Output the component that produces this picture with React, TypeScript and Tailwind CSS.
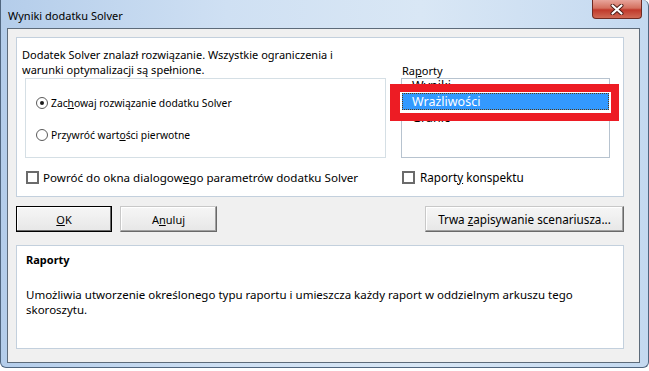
import React from 'react';

const Radio = ({ checked }: { checked?: boolean }) => (
  <span className="w-[12px] h-[12px] rounded-full border-[1.5px] border-[#5a5a5a] bg-white flex items-center justify-center shrink-0">
    {checked && <span className="w-[4px] h-[4px] rounded-full bg-[#1a1a1a]" />}
  </span>
);

const Check = () => <span className="w-[13px] h-[13px] border-2 border-[#6b6b6b] bg-white shrink-0" />;

const Btn = ({ children, className, primary }: { children: React.ReactNode; className: string; primary?: boolean }) => (
  <div
    className={`h-[26px] flex items-center justify-center bg-[linear-gradient(180deg,#f6f6f6,#e7e7e7)] ${
      primary
        ? 'border border-black shadow-[inset_-1px_-1px_0_#696969,inset_1px_1px_0_#ffffff]'
        : 'border border-[#c8c8c8] border-r-[#696969] border-b-[#696969] shadow-[inset_-1px_-1px_0_#a0a0a0,inset_1px_1px_0_#ffffff]'
    } ${className}`}
  >
    {children}
  </div>
);

const App: React.FC = () => {
  return (
    <div className="w-[649px] h-[371px] bg-white font-['Noto_Sans',sans-serif] text-[11px] leading-[15px] text-black overflow-hidden">
      <div className="w-[649px] h-[368px] flex flex-col border-x border-b border-[#50667f] rounded-b-[6px] rounded-tr-[6px] bg-[linear-gradient(90deg,#b4cdea,#cfe0f3_35%,#d9e7f5_65%,#c4d9f0)]">
        {/* Title bar */}
        <div className="h-[28px] flex justify-between shrink-0">
          <div className="pl-[7px] pt-[8px] text-[11px]">Wyniki dodatku Solver</div>
          <div className="mr-[6px] w-[50px] h-[19px] rounded-b-[4px] border border-t-0 border-[#6f2a22] bg-[linear-gradient(180deg,#e8a59b_0%,#d4705f_45%,#c0392b_55%,#d06a55_100%)] flex items-center justify-center">
            <svg width="14" height="11" viewBox="0 0 14 11">
              <path d="M2.5 1.5 L11.5 9.5 M11.5 1.5 L2.5 9.5" stroke="#4a1a14" strokeWidth="4" strokeLinecap="round" />
              <path d="M2.5 1.5 L11.5 9.5 M11.5 1.5 L2.5 9.5" stroke="#ffffff" strokeWidth="2.2" strokeLinecap="round" />
            </svg>
          </div>
        </div>

        <div className="flex h-[335px] shrink-0">
          <div className="w-[6px]" />
          {/* Client area */}
          <div className="w-[633px] border border-[#5d6b7a] bg-[#f0f0f0] pl-[8px] pt-[8px] flex flex-col">
            <div className="w-[608px] h-[160px] bg-white border border-[#c3d0dd] flex pl-[5px] pt-[9px] gap-[15px]">
              {/* left column */}
              <div className="w-[364px] flex flex-col">
                <div>
                  Dodatek Solver znalazł rozwiązanie. Wszystkie ograniczenia i
                  <br />
                  warunki optymalizacji są spełnione.
                </div>
                <div className="mt-[1px] ml-[3px] w-[361px] h-[80px] border border-[#d5dfe5] pt-[16px] pl-[10px] flex flex-col gap-[16px] text-[10.3px]">
                  <div className="h-[16px] flex items-center gap-[3px]">
                    <Radio checked />
                    <span>
                      Zac<span className="underline">h</span>owaj rozwiązanie dodatku Solver
                    </span>
                  </div>
                  <div className="h-[16px] flex items-center gap-[3px]">
                    <Radio />
                    <span>
                      Przywróć wart<span className="underline">o</span>ści pierwotne
                    </span>
                  </div>
                </div>
                <div className="mt-[11px] ml-[4px] h-[16px] flex items-center gap-[4px] text-[11.6px]">
                  <Check />
                  <span>
                    Powróć do okna dialogow<span className="underline">e</span>go parametrów dodatku Solver
                  </span>
                </div>
              </div>

              {/* right column */}
              <div className="w-[209px] flex flex-col">
                <div className="mt-[16px] h-[15px] pl-[1px]">
                  Ra<span className="underline">p</span>orty
                </div>
                <div className="w-[209px] h-[80px] border border-[#b7c3cf] bg-white relative text-[12.5px]">
                  <div className="h-[14px] leading-[14px] pl-[10px]">Wyniki</div>
                  <div className="h-[17px] bg-[#3399ff] text-white border border-dotted border-[#5a3a10] pl-[9px] leading-[15px]">
                    Wrażliwości
                  </div>
                  <div className="h-[16px] pl-[10px]">Granic</div>
                  {/* annotation */}
                  <div className="absolute left-[-12px] top-[5px] w-[229px] h-[37px] border-[#ed1c24] border-t-[8px] border-b-[8px] border-l-[10px] border-r-[8px]">
                    <div className="w-full h-full border-white border-x-2 border-y" />
                  </div>
                </div>
                <div className="mt-[11px] pl-[1px] h-[16px] flex items-center gap-[5px] text-[11.7px]">
                  <Check />
                  <span>
                    Raport<span className="underline">y</span> konspektu
                  </span>
                </div>
              </div>
            </div>

            {/* Buttons */}
            <div className="w-[608px] mt-[9px] flex">
              <Btn primary className="w-[96px]">
                <span>
                  <span className="underline">O</span>K
                </span>
              </Btn>
              <Btn className="w-[97px] ml-[8px]">
                <span>
                  A<span className="underline">n</span>uluj
                </span>
              </Btn>
              <Btn className="w-[199px] ml-auto text-[11.7px]">
                <span>
                  Trwa <span className="underline">z</span>apisywanie scenariusza...
                </span>
              </Btn>
            </div>

            {/* Description panel */}
            <div className="w-[608px] h-[104px] mt-[13px] bg-white border border-[#c3d0dd] pl-[9px] pt-[6px]">
              <div className="font-bold">Raporty</div>
              <div className="mt-[20px] text-[11.5px]">
                Umożliwia utworzenie określonego typu raportu i umieszcza każdy raport w oddzielnym arkuszu tego
                <br />
                skoroszytu.
              </div>
            </div>
          </div>
          <div className="w-[8px]" />
        </div>
      </div>
    </div>
  );
};

export default App;
